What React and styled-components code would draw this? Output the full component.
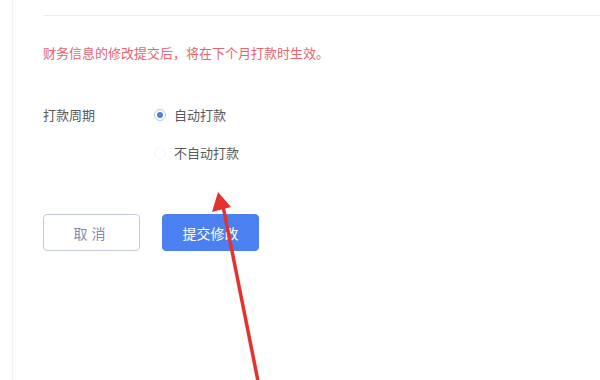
import React from 'react';
import styled, { createGlobalStyle } from 'styled-components';

const GlobalStyle = createGlobalStyle`
  html, body {
    margin: 0;
    padding: 0;
    background: #fff;
  }
  body {
    font-family: "Noto Sans CJK SC", "Noto Sans", sans-serif;
  }
`;

const Page = styled.div`
  position: relative;
  width: 600px;
  height: 380px;
  overflow: hidden;
  background: #fff;
`;

const Panel = styled.div`
  margin-left: 12px;
  height: 100%;
  border-left: 1px solid #f3f3f3;
  padding: 15px 0 0 30px;
  box-sizing: border-box;
`;

const Divider = styled.div`
  height: 1px;
  background: #eeeeee;
`;

const Notice = styled.p`
  margin: 28px 0 0;
  font-size: 13px;
  line-height: 18px;
  color: #e8646e;
`;

const FormRow = styled.div`
  display: flex;
  margin-top: 43px;
`;

const Label = styled.div`
  width: 111px;
  font-size: 13px;
  line-height: 20px;
  color: #5a5a5a;
`;

const RadioGroup = styled.div`
  display: flex;
  flex-direction: column;
  gap: 18px;
`;

const Option = styled.label`
  display: flex;
  align-items: center;
  gap: 8px;
  font-size: 13px;
  line-height: 20px;
  color: #5a5a5a;
`;

const Circle = styled.span`
  width: 12px;
  height: 12px;
  border-radius: 50%;
  box-sizing: border-box;
  border: 1px solid ${(p) => (p.$checked ? '#b9c9e6' : '#f4f4f4')};
  display: flex;
  align-items: center;
  justify-content: center;

  &::after {
    content: '';
    width: 6px;
    height: 6px;
    border-radius: 50%;
    background: ${(p) => (p.$checked ? '#4b7fe0' : 'transparent')};
  }
`;

const Actions = styled.div`
  display: flex;
  gap: 22px;
  margin-top: 51px;
`;

const Button = styled.button`
  width: 97px;
  height: 37px;
  border-radius: 4px;
  font-family: inherit;
  font-size: 14px;
  cursor: pointer;
  border: 1px solid ${(p) => (p.$primary ? '#4b80f0' : '#c3cbdb')};
  background: ${(p) => (p.$primary ? '#4b80f0' : '#fff')};
  color: ${(p) => (p.$primary ? '#fff' : '#7f8dab')};
  letter-spacing: ${(p) => (p.$primary ? '0' : '4px')};
`;

const Arrow = styled.svg`
  position: absolute;
  left: 0;
  top: 0;
  pointer-events: none;
`;

const options = [
  { id: 'auto', text: '自动打款', checked: true },
  { id: 'manual', text: '不自动打款', checked: false },
];

export default function App() {
  return (
    <Page>
      <GlobalStyle />
      <Panel>
        <Divider />
        <Notice>财务信息的修改提交后，将在下个月打款时生效。</Notice>
        <FormRow>
          <Label>打款周期</Label>
          <RadioGroup>
            {options.map((o) => (
              <Option key={o.id}>
                <Circle $checked={o.checked} />
                {o.text}
              </Option>
            ))}
          </RadioGroup>
        </FormRow>
        <Actions>
          <Button>取消</Button>
          <Button $primary>提交修改</Button>
        </Actions>
      </Panel>

      {/* red annotation arrow drawn over the form */}
      <Arrow width="600" height="380" viewBox="0 0 600 380">
        <line x1="259" y1="386" x2="223" y2="206" stroke="#e2332f" strokeWidth="3.5" strokeLinecap="round" />
        <polygon points="218,192 212,212 231,207" fill="#e2332f" />
      </Arrow>
    </Page>
  );
}
